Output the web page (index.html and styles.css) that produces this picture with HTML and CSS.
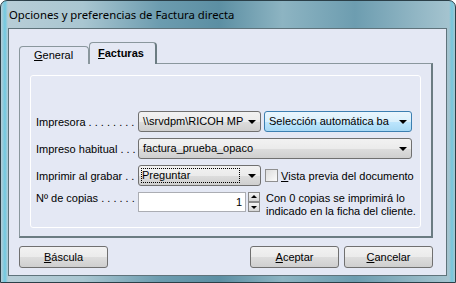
FILE: index.html
```html
<!DOCTYPE html>
<html lang="es">
<head>
  <meta charset="UTF-8">
  <title>Opciones y preferencias de Factura directa</title>
  <link rel="stylesheet" href="styles.css">
</head>
<body>
  <div class="window">
    <div class="titlebar">Opciones y preferencias de Factura directa</div>
    <div class="client">
      <div class="tabs">
        <div class="tab"><u>G</u>eneral</div>
        <div class="tab active"><u>F</u>acturas</div>
      </div>
      <div class="panel">
        <div class="group">
          <div class="row row-first">
            <span class="label">Impresora . . . . . . . .</span>
            <div class="combo combo-short">\\srvdpm\RICOH MP<span class="arrow"></span></div>
            <div class="combo combo-tray hot">Selección automática ba<span class="arrow"></span></div>
          </div>
          <div class="row">
            <span class="label">Impreso habitual . . .</span>
            <div class="combo combo-wide">factura_prueba_opaco<span class="arrow"></span></div>
          </div>
          <div class="row">
            <span class="label">Imprimir al grabar . .</span>
            <div class="combo combo-short"><span class="focus">Preguntar</span><span class="arrow"></span></div>
            <label class="check"><span class="box"></span><u>V</u>ista previa del documento</label>
          </div>
          <div class="row row-copies">
            <span class="label">Nº de copias . . . . . .</span>
            <div class="edit">1</div>
            <div class="spin">
              <span class="spin-btn up"></span>
              <span class="spin-btn down"></span>
            </div>
            <p class="hint">Con 0 copias se imprimirá lo<br>indicado en la ficha del cliente.</p>
          </div>
        </div>
      </div>
      <div class="buttons">
        <button class="btn"><u>B</u>áscula</button>
        <span class="spacer"></span>
        <button class="btn"><u>A</u>ceptar</button>
        <button class="btn"><u>C</u>ancelar</button>
      </div>
    </div>
  </div>
</body>
</html>
```

FILE: styles.css
```css
html, body {
  margin: 0;
  padding: 0;
  background: #ffffff;
}
.window {
  width: 456px;
  height: 283px;
  box-sizing: border-box;
  padding: 0 8px 6px 7px;
  border-radius: 7px 7px 0 0;
  border: 1px solid #2b3f48;
  background:
    linear-gradient(to right, rgba(80, 200, 230, 0) 0, rgba(80, 200, 230, 0.7) 4px, rgba(80, 200, 230, 0) 7px),
    linear-gradient(to left, rgba(80, 200, 230, 0) 0, rgba(80, 200, 230, 0.6) 3px, rgba(80, 200, 230, 0) 6px),
    linear-gradient(to right, #b9ced7 0%, #a9c6d1 18%, #6c9caf 35%, #5c8fa3 48%, #8db4c2 62%, #6d9db0 78%, #a8c6d1 100%);
  display: flex;
  flex-direction: column;
  font-family: "Liberation Sans", Arial, sans-serif;
  font-size: 11px;
  color: #000000;
}
.titlebar {
  height: 27px;
  line-height: 27px;
  padding-left: 1px;
  font-family: "Noto Sans", "Liberation Sans", sans-serif;
  font-size: 11.3px;
  color: #000000;
  white-space: nowrap;
}
.client {
  flex: 1;
  background: #e4e8f4;
  border: 1px solid #5f737b;
  display: flex;
  flex-direction: column;
  padding: 14px 13px 0 10px;
}
.tabs {
  display: flex;
  align-items: flex-end;
  height: 21px;
  margin-bottom: -1px;
  position: relative;
  z-index: 1;
}
.tab {
  height: 18px;
  line-height: 17px;
  box-sizing: border-box;
  padding: 0 0 0 14px;
  width: 70px;
  border: 1px solid #8a979d;
  border-bottom: none;
  border-radius: 4px 4px 0 0;
  background: #e4e8f4;
}
.tab.active {
  height: 22px;
  width: 68px;
  line-height: 21px;
  font-weight: bold;
  padding-left: 8px;
  border-right: 2px solid #6b7c82;
  background: #e4e8f4;
}
.panel {
  height: 175px;
  box-sizing: border-box;
  border: 1px solid #8a979d;
  border-right: 2px solid #6b7c82;
  border-bottom: 2px solid #6b7c82;
  padding: 11px 10px 0 10px;
}
.group {
  height: 153px;
  box-sizing: border-box;
  border: 1px solid #ffffff;
  border-radius: 3px;
  padding: 35px 0 0 5px;
}
.row {
  display: flex;
  align-items: center;
  height: 21px;
  margin-bottom: 6px;
}
.label {
  width: 102px;
  flex: none;
  overflow: hidden;
  white-space: nowrap;
}
.combo {
  position: relative;
  box-sizing: border-box;
  height: 21px;
  line-height: 19px;
  border: 1px solid #707070;
  border-radius: 3px;
  background: linear-gradient(#f2f2f2 0%, #ebebeb 50%, #dddddd 51%, #cfcfcf 100%);
  padding: 0 18px 0 4px;
  overflow: hidden;
  white-space: nowrap;
  flex: none;
}
.combo-short {
  width: 123px;
}
.combo-tray {
  width: 148px;
  margin-left: 3px;
}
.combo-wide {
  width: 274px;
}
.combo.hot {
  border-color: #3c7fb1;
  background: linear-gradient(#eaf6fd 0%, #d9f0fc 50%, #bee6fd 51%, #a7d9f5 100%);
}
.arrow {
  position: absolute;
  right: 0;
  top: 0;
  width: 17px;
  height: 19px;
}
.arrow::after {
  content: "";
  position: absolute;
  left: 5px;
  top: 8px;
  border-left: 4px solid transparent;
  border-right: 4px solid transparent;
  border-top: 4px solid #000000;
}
.focus {
  display: inline-block;
  outline: 1px dotted #000000;
  outline-offset: -1px;
  line-height: 15px;
  width: 98px;
  padding-left: 1px;
  margin-left: -2px;
}
.check {
  display: flex;
  align-items: center;
  margin-left: 4px;
  white-space: nowrap;
}
.box {
  width: 11px;
  height: 11px;
  border: 1px solid #8f8f8f;
  background: linear-gradient(135deg, #dcdcdc, #fbfbfb);
  margin-right: 3px;
}
.row-copies {
  align-items: flex-start;
  height: 36px;
}
.edit {
  box-sizing: border-box;
  width: 108px;
  height: 20px;
  line-height: 18px;
  border: 1px solid #abadb3;
  background: #ffffff;
  text-align: right;
  padding-right: 3px;
}
.spin {
  display: flex;
  flex-direction: column;
  margin-left: 2px;
  width: 12px;
  height: 20px;
}
.spin-btn {
  position: relative;
  height: 10px;
  box-sizing: border-box;
  border: 1px solid #8a8a8a;
  background: linear-gradient(#f4f4f4, #d6d6d6);
}
.spin-btn::after {
  content: "";
  position: absolute;
  left: 2px;
  border-left: 3px solid transparent;
  border-right: 3px solid transparent;
}
.spin-btn.up::after {
  top: 2px;
  border-bottom: 3px solid #000000;
}
.spin-btn.down::after {
  top: 3px;
  border-top: 3px solid #000000;
}
.hint {
  margin: 0 0 0 6px;
  line-height: 13px;
}
.buttons {
  display: flex;
  margin-top: 8px;
  gap: 5px;
}
.spacer {
  flex: 1;
}
.btn {
  width: 89px;
  height: 22px;
  padding: 0;
  font-family: "Liberation Sans", Arial, sans-serif;
  font-size: 11px;
  color: #000000;
  border: 1px solid #707070;
  border-radius: 3px;
  background: linear-gradient(#f2f2f2 0%, #ebebeb 50%, #dddddd 51%, #cfcfcf 100%);
}
```
